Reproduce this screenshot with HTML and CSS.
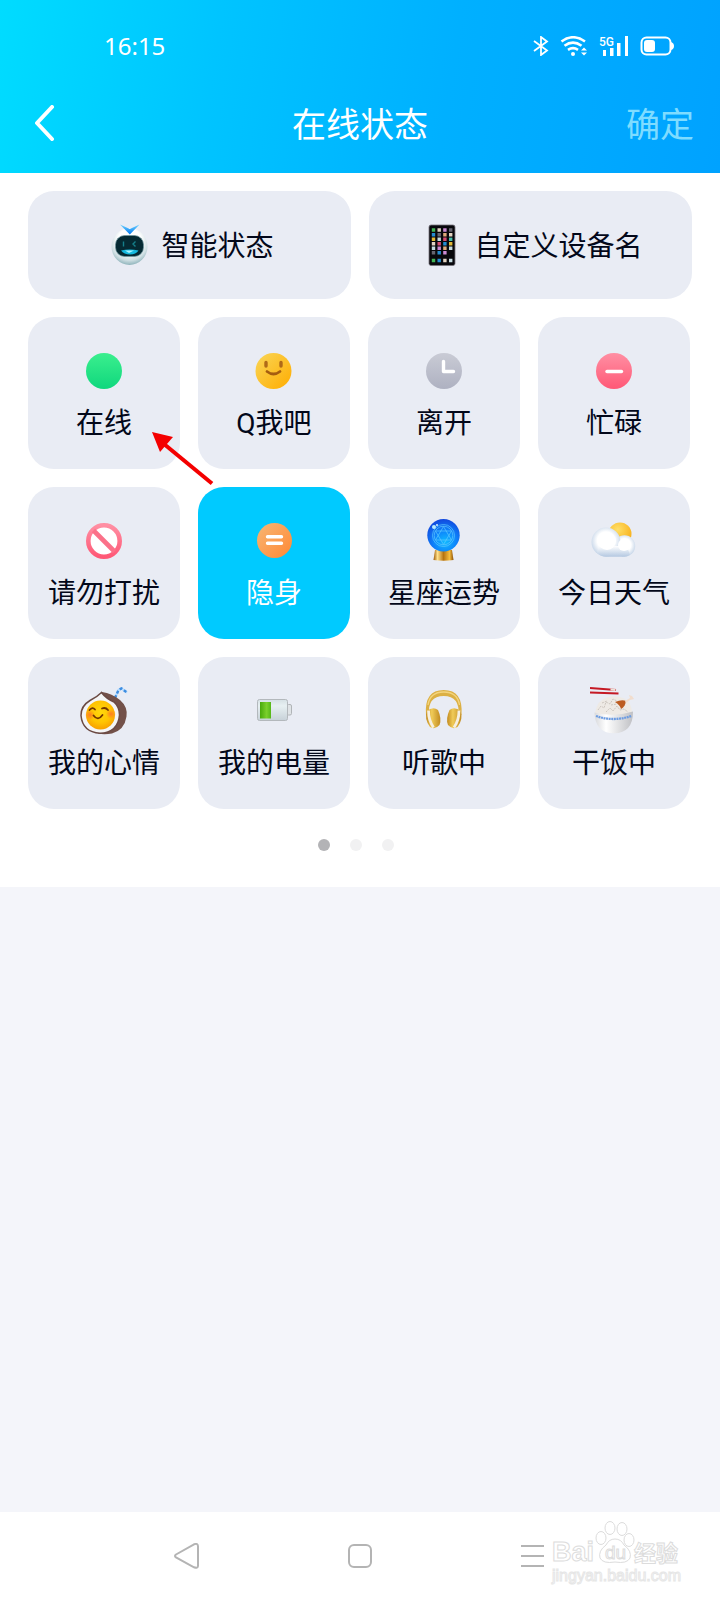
FILE: index.html
```html
<!DOCTYPE html>
<html lang="zh-CN">
<head>
    <meta charset="UTF-8">
    <meta name="viewport" content="width=device-width, initial-scale=1.0">
    <title>在线状态</title>
    <link rel="stylesheet" href="styles.css">
</head>
<body>
    <header class="header">
        <div class="status-bar">
            <span class="clock">16:15</span>
            <div class="signals">
                <svg class="bluetooth" viewBox="0 0 16 20" width="16" height="20" fill="none" stroke="#fff" stroke-width="1.800">
                    <path d="M1 5l13 9.500-6 4.500V1l6 4.500L1 15"/>
                </svg>
                <svg class="wifi" viewBox="0 0 28 20" width="28" height="20" fill="none" stroke="#fff" stroke-width="2.600">
                    <path d="M1.500 5.500Q13 -3 25 5.500M4.500 9.800Q13 3.500 21.500 9.800M8 13.800Q13 10.500 18 13.800"/>
                    <circle cx="13" cy="18" r="2" fill="#fff" stroke="none"/>
                    <path d="M21 14.500l3-3 3 3zM21 16.500l3 3 3-3z" fill="#fff" stroke="none"/>
                </svg>
                <svg class="mobile" viewBox="0 0 30 20" width="30" height="20" fill="#fff">
                    <text x="0" y="10" class="network">5G</text>
                    <path d="M4 14h3v6H4zM11 12h3.500v8H11zM18 7h3.500v13H18zM26 0h3v20h-3z"/>
                </svg>
                <svg class="battery" viewBox="0 0 34 20" width="34" height="20">
                    <rect x="1.500" y="1.500" width="29" height="17" rx="5" fill="none" stroke="#fff" stroke-width="2"/>
                    <rect x="4" y="4" width="11" height="12" rx="3" fill="#fff"/>
                    <path d="M31 6q3 1 3 4t-3 4z" fill="#fff"/>
                </svg>
            </div>
        </div>
        <div class="title-bar">
            <button class="back" type="button" aria-label="返回">
                <svg viewBox="0 0 20 36" width="20" height="36" fill="none" stroke="#fff" stroke-width="4" stroke-linecap="round" stroke-linejoin="round">
                    <path d="M17 2L2 18l15 16"/>
                </svg>
            </button>
            <h1>在线状态</h1>
            <button class="confirm" type="button">确定</button>
        </div>
    </header>

    <main class="panel">
        <div class="wide-row">
            <button class="card wide" type="button">
                <svg class="icon" viewBox="0 0 48 48">
                    <defs>
                        <radialGradient id="robotHead" cx=".5" cy=".35" r=".65">
                            <stop offset=".5" stop-color="#fff"/>
                            <stop offset=".8" stop-color="#cfdfe3"/>
                            <stop offset="1" stop-color="#8fb4bb"/>
                        </radialGradient>
                        <linearGradient id="robotEar" x2="0" y2="1">
                            <stop offset="0" stop-color="#6fd2ff"/>
                            <stop offset="1" stop-color="#0078f0"/>
                        </linearGradient>
                    </defs>
                    <ellipse cx="24.500" cy="25.500" rx="18" ry="18.500" fill="url(#robotHead)"/>
                    <rect x="10.500" y="14.500" width="28" height="21" rx="9" fill="#052a33" stroke="#6f969d" stroke-width=".7"/>
                    <path d="M18.500 20.500v5M30.500 20.500l-2.500 2.500 2.500 2.500" fill="none" stroke="#157f8a" stroke-width="1.400"/>
                    <path d="M16 29.500q8.500-2 17.500 0-2.500 4-8.500 4t-9-4z" fill="#16b9df"/>
                    <path d="M20 29.500h9l-5 2.500z" fill="#a8f6ff"/>
                    <path d="M15 3.500l9.800 4.500 9.700-4.500-9.700 10z" fill="url(#robotEar)"/>
                </svg>
                <span>智能状态</span>
            </button>
            <button class="card wide" type="button">
                <svg class="icon" viewBox="0 0 48 48">
                    <rect x="11" y="4" width="26" height="40.500" rx="2" fill="#08080c" stroke="#77747c" stroke-width=".8"/>
                    <g stroke-width="3.400" fill="none">
                        <path d="M13.800 9h3.400M13.800 39.500h3.400" stroke="#42b455"/>
                        <path d="M19.500 9h3.400M13.800 22.700h3.400M25.200 39.500h3.400M31 13.700h3.400" stroke="#e3d4c3"/>
                        <path d="M25.200 9h3.400M19.500 27.300h3.400M25.200 31.700h3.400" stroke="#cc8bd4"/>
                        <path d="M31 9h3.400M13.800 31.700h3.400M19.500 13.700h3.400" stroke="#666570"/>
                        <path d="M13.800 13.700h3.400M19.500 31.700h3.400M19.500 39.500h3.400M25.200 22.700h3.400" stroke="#248cd0"/>
                        <path d="M13.800 18.300h3.400M31 22.700h3.400" stroke="#e1b938"/>
                        <path d="M25.200 13.700h3.400M25.200 27.300h3.400" stroke="#dfaa79"/>
                        <path d="M19.500 18.300h3.400M31 27.300h3.400M31 39.500h3.400M13.800 27.300h3.400" stroke="#c8dde2"/>
                        <path d="M25.200 18.300h3.400M19.500 22.700h3.400" stroke="#d64b70"/>
                        <path d="M31 18.300h3.400" stroke="#48bfae"/>
                    </g>
                </svg>
                <span>自定义设备名</span>
            </button>
        </div>

        <div class="status-grid">
            <button class="card" type="button">
                <svg class="icon" viewBox="0 0 48 48">
                    <defs>
                        <linearGradient id="green" x2="0" y2="1">
                            <stop offset="0" stop-color="#3bef8e"/>
                            <stop offset="1" stop-color="#0fd77d"/>
                        </linearGradient>
                    </defs>
                    <circle cx="24" cy="24" r="18" fill="url(#green)"/>
                </svg>
                <span>在线</span>
            </button>
            <button class="card" type="button">
                <svg class="icon" viewBox="0 0 48 48">
                    <defs>
                        <linearGradient id="yellow" x2="1" y2="1">
                            <stop offset=".1" stop-color="#fad24f"/>
                            <stop offset="1" stop-color="#ffac00"/>
                        </linearGradient>
                    </defs>
                    <circle cx="23.500" cy="24" r="18" fill="url(#yellow)"/>
                    <path d="M16 15.500v3.500M31 15.500v3.500" fill="none" stroke="#b06a18" stroke-width="3.400" stroke-linecap="round"/>
                    <path d="M17 24.500q6.500 5 13 0" fill="none" stroke="#a55d10" stroke-width="2.800" stroke-linecap="round"/>
                </svg>
                <span>Q我吧</span>
            </button>
            <button class="card" type="button">
                <svg class="icon" viewBox="0 0 48 48">
                    <defs>
                        <linearGradient id="grey" x2="0" y2="1">
                            <stop offset="0" stop-color="#c9cbd5"/>
                            <stop offset="1" stop-color="#aeb1c1"/>
                        </linearGradient>
                    </defs>
                    <circle cx="24" cy="24" r="18" fill="url(#grey)"/>
                    <path d="M23.500 14.500v10h10" fill="none" stroke="#fff" stroke-width="3.400" stroke-linecap="round" stroke-linejoin="round"/>
                </svg>
                <span>离开</span>
            </button>
            <button class="card" type="button">
                <svg class="icon" viewBox="0 0 48 48">
                    <defs>
                        <linearGradient id="pink" x2="0" y2="1">
                            <stop offset="0" stop-color="#ff8fa3"/>
                            <stop offset="1" stop-color="#ff5876"/>
                        </linearGradient>
                    </defs>
                    <circle cx="24" cy="24" r="18" fill="url(#pink)"/>
                    <path d="M17 24.500h14.500" stroke="#fff" stroke-width="3.400" stroke-linecap="round"/>
                </svg>
                <span>忙碌</span>
            </button>
            <button class="card" type="button">
                <svg class="icon" viewBox="0 0 48 48">
                    <circle cx="24" cy="24" r="15.700" fill="#fff" stroke="url(#pink)" stroke-width="4.600"/>
                    <path d="M13.500 13.500l21 21" stroke="#fb7189" stroke-width="4.600"/>
                </svg>
                <span>请勿打扰</span>
            </button>
            <button class="card active" type="button" aria-pressed="true">
                <svg class="icon" viewBox="0 0 48 48">
                    <defs>
                        <linearGradient id="orange" x2="1" y2="1">
                            <stop offset=".1" stop-color="#f8b26e"/>
                            <stop offset="1" stop-color="#ff8834"/>
                        </linearGradient>
                    </defs>
                    <circle cx="24.500" cy="23.500" r="17.500" fill="url(#orange)"/>
                    <path d="M17.500 19.800H31.500M17.500 26.300H31.500" stroke="#fff" stroke-width="3.400" stroke-linecap="round"/>
                </svg>
                <span>隐身</span>
            </button>
            <button class="card" type="button">
                <svg class="icon" viewBox="0 0 48 48">
                    <defs>
                        <radialGradient id="ball" cx=".55" cy=".7" r=".7">
                            <stop offset="0" stop-color="#10bbff"/>
                            <stop offset=".5" stop-color="#0d83fb"/>
                            <stop offset="1" stop-color="#1248dd"/>
                        </radialGradient>
                        <linearGradient id="base">
                            <stop offset="0" stop-color="#9d5a08"/>
                            <stop offset=".2" stop-color="#ffe08a"/>
                            <stop offset=".5" stop-color="#b87410"/>
                            <stop offset=".8" stop-color="#f6bd3d"/>
                            <stop offset="1" stop-color="#8c5004"/>
                        </linearGradient>
                    </defs>
                    <path d="M15 33h17l1.500 10q-10 1.500-20 0z" fill="url(#base)"/>
                    <circle cx="23.500" cy="18.300" r="16.200" fill="url(#ball)"/>
                    <g fill="none" stroke="#5dc8ff" stroke-width=".7">
                        <circle cx="23.500" cy="18.500" r="11"/>
                        <circle cx="23.500" cy="18.500" r="9.300"/>
                        <path d="M23.500 9.500l8 13.500h-16zM23.500 27.500l8-13.500h-16z"/>
                    </g>
                    <circle cx="14" cy="10" r="2" fill="#b8ecff"/>
                    <circle cx="17" cy="8" r="1" fill="#d8f5ff"/>
                </svg>
                <span>星座运势</span>
            </button>
            <button class="card" type="button">
                <svg class="icon" viewBox="0 0 48 48">
                    <defs>
                        <radialGradient id="sun" cx=".4" cy=".3" r=".8">
                            <stop offset="0" stop-color="#ffdf67"/>
                            <stop offset="1" stop-color="#f7a90f"/>
                        </radialGradient>
                        <radialGradient id="cloud" cx=".5" cy=".45" r=".6">
                            <stop offset=".5" stop-color="#fff"/>
                            <stop offset="1" stop-color="#b9cce3"/>
                        </radialGradient>
                        <linearGradient id="cloudFoot" x2="0" y2="1">
                            <stop offset="0" stop-color="#fff"/>
                            <stop offset="1" stop-color="#b4c8e1"/>
                        </linearGradient>
                    </defs>
                    <circle cx="30" cy="17" r="11.500" fill="url(#sun)"/>
                    <circle cx="34.500" cy="29" r="10.700" fill="url(#cloud)"/>
                    <circle cx="16" cy="25" r="14.500" fill="url(#cloud)"/>
                    <path d="M9 29h28l3 9q-3 1.700-6 1.700H16Q11 39.700 7 36z" fill="url(#cloudFoot)"/>
                    <circle cx="17" cy="24" r="9" fill="#fff"/>
                    <circle cx="34" cy="28" r="6" fill="#fff"/>
                </svg>
                <span>今日天气</span>
            </button>
            <button class="card" type="button">
                <svg class="icon" viewBox="0 0 48 48">
                    <defs>
                        <radialGradient id="yolk" cx=".5" cy=".4" r=".6">
                            <stop offset="0" stop-color="#ffd80c"/>
                            <stop offset=".6" stop-color="#ffc402"/>
                            <stop offset="1" stop-color="#f8a000"/>
                        </radialGradient>
                        <radialGradient id="blush">
                            <stop offset="0" stop-color="#ff7c22"/>
                            <stop offset="1" stop-color="#ff7c22" stop-opacity="0"/>
                        </radialGradient>
                    </defs>
                    <path d="M35 11l3.500-8 3-1.500L47 5.500" fill="none" stroke="#b7dcff" stroke-width="2.400"/>
                    <path d="M35 11l3.500-8 3-1.500L47 5.500" fill="none" stroke="#3e8de0" stroke-width="2.400" stroke-dasharray="3 2"/>
                    <path d="M22 5q10 1.500 18 8 8 7 6.500 16.500Q44.500 43 32 46.500q-8 1.500-14 0z" fill="#735149"/>
                    <path d="M21.500 5.500Q17 10 10 13.500 .800 19 1 28.500 2.500 45 20 46.300 38 45.500 39.500 28q0-8-5.500-13-8-3.500-12.500-9.500z" fill="#f4f5f5" stroke="#6b4a43" stroke-width="1.500"/>
                    <circle cx="20.500" cy="28" r="14.500" fill="url(#yolk)"/>
                    <circle cx="10" cy="28" r="5" fill="url(#blush)"/>
                    <circle cx="31" cy="27" r="5" fill="url(#blush)"/>
                    <path d="M9.500 23q3-3.500 5.500-.500M22 21.500q3.500-1.500 6 1.500M13.500 28.500q4.500 6 9-.500" fill="none" stroke="#733600" stroke-width="1.800" stroke-linecap="round"/>
                </svg>
                <span>我的心情</span>
            </button>
            <button class="card" type="button">
                <svg class="icon" viewBox="0 0 48 48">
                    <defs>
                        <linearGradient id="cell">
                            <stop offset="0" stop-color="#48a80b"/>
                            <stop offset=".6" stop-color="#7bd02c"/>
                            <stop offset="1" stop-color="#55b719"/>
                        </linearGradient>
                        <linearGradient id="case" x2="0" y2="1">
                            <stop offset="0" stop-color="#d5e0e4"/>
                            <stop offset=".3" stop-color="#e7f0f2"/>
                            <stop offset="1" stop-color="#c7d1d8"/>
                        </linearGradient>
                    </defs>
                    <rect x="37" y="17.500" width="4.500" height="10.500" rx="1.500" fill="#dfe3e6" stroke="#b0b4b7"/>
                    <rect x="7.500" y="12.500" width="30" height="21" rx="2" fill="url(#case)" stroke="#b3b8bc"/>
                    <rect x="10" y="15" width="11" height="16.500" fill="url(#cell)"/>
                </svg>
                <span>我的电量</span>
            </button>
            <button class="card" type="button">
                <svg class="icon" viewBox="0 0 48 48">
                    <defs>
                        <linearGradient id="gold">
                            <stop offset="0" stop-color="#c28a1f"/>
                            <stop offset=".4" stop-color="#f0cb58"/>
                            <stop offset="1" stop-color="#c18b20"/>
                        </linearGradient>
                    </defs>
                    <path d="M6 28Q4 3 23.700 3T41.500 28h-3Q40 9 23.700 9T9 28z" fill="#dcb044"/>
                    <path d="M8 18Q10 5 23.700 5T39.500 18" fill="none" stroke="#f3d47e" stroke-width="1.300"/>
                    <path d="M7 24q6-5 11-1 4 9 1.500 15Q15 43 10 40 4 32 7 24z" fill="url(#gold)"/>
                    <path d="M40.500 24q-6-5-11-1-4 9-1.500 15 4.500 5 9.500 2 6-8 3-16z" fill="url(#gold)"/>
                    <path d="M8.500 23.500q0 10 5 17" fill="none" stroke="#f6efe0" stroke-width="2.800"/>
                    <path d="M39 23.500q0 10-5 17" fill="none" stroke="#f6efe0" stroke-width="2.800"/>
                </svg>
                <span>听歌中</span>
            </button>
            <button class="card" type="button">
                <svg class="icon" viewBox="0 0 48 48">
                    <defs>
                        <linearGradient id="bowl">
                            <stop offset="0" stop-color="#d8d9dc"/>
                            <stop offset=".3" stop-color="#fff"/>
                            <stop offset="1" stop-color="#bfc0c4"/>
                        </linearGradient>
                    </defs>
                    <path d="M5 26Q7 13 18 10q15-3 22 7 2 5 2 9-18 6-37 0z" fill="#eeeae5"/>
                    <path d="M8 23l3-4 3 2 2-6 4 2 3-5 4 2M16 25l4-4 3 3 4-5 3 4 4-1 4 3M12 16l5-2M21 18l6-1M30 14l5 5" fill="none" stroke="#c4bdb5" stroke-width=".8" stroke-dasharray="2 1"/>
                    <path d="M4.500 25.500q19 5 38.500-1Q43 46 24 46.300 5 46 4.500 25.500z" fill="url(#bowl)"/>
                    <path d="M6 29q17 6 35.500 0" fill="none" stroke="#6c9ce2" stroke-width="2.300" stroke-dasharray="2 .6"/>
                    <path d="M0 1l26 2M0 5.500l28.500 1" fill="none" stroke="#c51924" stroke-width="2"/>
                    <path d="M20.500 2.500l5 .500" stroke="#eee3d9" stroke-width="2"/>
                    <path d="M25 15q7-3 11-1-1 6-5 8-1-4-6-7z" fill="#bc5c21"/>
                    <path d="M35 14l5-3-1-3 3 1 2 3-4 1-4 3z" fill="#f1ddce"/>
                </svg>
                <span>干饭中</span>
            </button>
            <svg class="pointer" viewBox="0 0 62 54" width="62" height="54" fill="#f40000">
                <path d="M12 12L60 51.500" stroke="#f40000" stroke-width="4"/>
                <path d="M0 0l21 5L8 20z"/>
            </svg>
        </div>

        <div class="dots">
            <i class="dot current"></i>
            <i class="dot"></i>
            <i class="dot"></i>
        </div>
    </main>

    <nav class="nav-bar">
        <button type="button" aria-label="后退">
            <svg viewBox="0 0 26 26" width="26" height="26">
                <path d="M3 11.500L21 1.300q4-1.500 4 2v19.500q0 3-4 1.500L3 14.500q-2-1.500 0-3z"/>
            </svg>
        </button>
        <button type="button" aria-label="主页">
            <svg viewBox="0 0 26 26" width="26" height="26">
                <rect x="2" y="2" width="22" height="22" rx="5"/>
            </svg>
        </button>
        <button type="button" aria-label="最近任务">
            <svg viewBox="0 0 26 26" width="26" height="26">
                <path d="M0 3h23M0 13h23M0 23h23"/>
            </svg>
        </button>
        <svg class="watermark" viewBox="0 0 132 66" width="132" height="66">
            <text x="2" y="41" class="brand">Bai</text>
            <text x="84" y="41" class="brand-cn">经验</text>
            <path d="M65 19q6 0 9 6 8 6 6 13-3 6-15 4-12 2-15-4-2-7 6-13 3-6 9-6z"/>
            <ellipse cx="51" cy="18" rx="5" ry="6.500"/>
            <ellipse cx="60" cy="8" rx="5" ry="6.500"/>
            <ellipse cx="72" cy="9" rx="5" ry="6.500"/>
            <ellipse cx="79" cy="20" rx="5" ry="6.500"/>
            <text x="55" y="39" class="brand-du">du</text>
            <text x="2" y="61" class="brand-url">jingyan.baidu.com</text>
        </svg>
    </nav>
</body>
</html>
```
FILE: styles.css
```css
*{
    margin: 0;
    padding: 0;
    box-sizing: border-box;
}

body{
    min-height: 100vh;
    display: flex;
    flex-direction: column;
    background-color: #f4f5fa;
    color: #03081a;
    font-family: Roboto, "Noto Sans CJK SC", sans-serif;
    font-weight: 400;
}

button{
    border: 0;
    background: none;
    color: inherit;
    font: inherit;
    cursor: pointer;
}

svg{
    display: block;
}

.header{
    background: linear-gradient(99deg, #00dcff 0%, #00c4ff 30%, #00b0ff 62%, #00a2ff 100%);
    color: #fff;
}

.status-bar{
    display: flex;
    justify-content: space-between;
    align-items: center;
    height: 76px;
    padding: 16px 46px 0 104px;
}

.clock{
    font-family: "Noto Sans", sans-serif;
    font-size: 24px;
    line-height: 30px;
}

.signals{
    display: flex;
    align-items: center;
    gap: 11px;
}

.mobile{
    overflow: visible;
}

.network{
    font-family: Roboto, sans-serif;
    font-size: 12px;
    font-weight: 500;
}

.title-bar{
    display: grid;
    grid-template-columns: 1fr auto 1fr;
    align-items: center;
    height: 97px;
    padding: 0 26px 4px;
    font-size: 34px;
}

.title-bar h1{
    font-size: 34px;
    font-weight: 400;
}

.back{
    justify-self: start;
    padding-left: 9px;
}

.confirm{
    justify-self: end;
    color: #7fdcff;
}

.panel{
    padding: 18px 28px 36px;
    background-color: #fff;
}

.wide-row{
    display: grid;
    grid-template-columns: 1fr 1fr;
    gap: 18px;
    margin-bottom: 18px;
}

.status-grid{
    position: relative;
    display: grid;
    grid-template-columns: repeat(4, 1fr);
    gap: 18px;
    padding-right: 2px;
}

.card{
    display: flex;
    flex-direction: column;
    align-items: center;
    gap: 8px;
    height: 152px;
    padding-top: 30px;
    border-radius: 26px;
    background-color: #e9ecf4;
    font-size: 28px;
    line-height: 42px;
    white-space: nowrap;
}

.card.wide{
    flex-direction: row;
    justify-content: center;
    height: 108px;
    padding-top: 0;
}

.card.wide span{
    padding-top: 4px;
}

.card.active{
    background-color: #00caff;
    color: #fff;
}

.icon{
    width: 48px;
    height: 48px;
}

/* red arrow over the first row */
.pointer{
    position: absolute;
    top: 115px;
    left: 124px;
}

.dots{
    display: flex;
    justify-content: center;
    gap: 20px;
    margin-top: 30px;
    padding-right: 8px;
}

.dot{
    width: 12px;
    height: 12px;
    border-radius: 50%;
    background-color: #f1f1f2;
}

.dot.current{
    background-color: #b3b3b6;
}

.nav-bar{
    position: relative;
    display: flex;
    justify-content: space-between;
    align-items: center;
    height: 88px;
    margin-top: auto;
    padding: 0 24%;
    background-color: #fff;
}

.nav-bar button svg{
    fill: none;
    stroke: #b4b4b4;
    stroke-width: 2;
}

.watermark{
    position: absolute;
    top: 8px;
    right: 38px;
    fill: #fff;
    stroke: #dcdcdc;
    stroke-width: 1;
}

.brand{
    font-family: "Liberation Sans", sans-serif;
    font-size: 27px;
    font-weight: 700;
}

.brand-cn{
    font-family: "Noto Sans CJK SC", sans-serif;
    font-size: 22px;
    font-weight: 700;
}

.brand-du{
    font-family: "Liberation Sans", sans-serif;
    font-size: 19px;
}

.brand-url{
    font-family: "Liberation Sans", sans-serif;
    font-size: 16px;
    stroke: #e6e6e6;
}
```
